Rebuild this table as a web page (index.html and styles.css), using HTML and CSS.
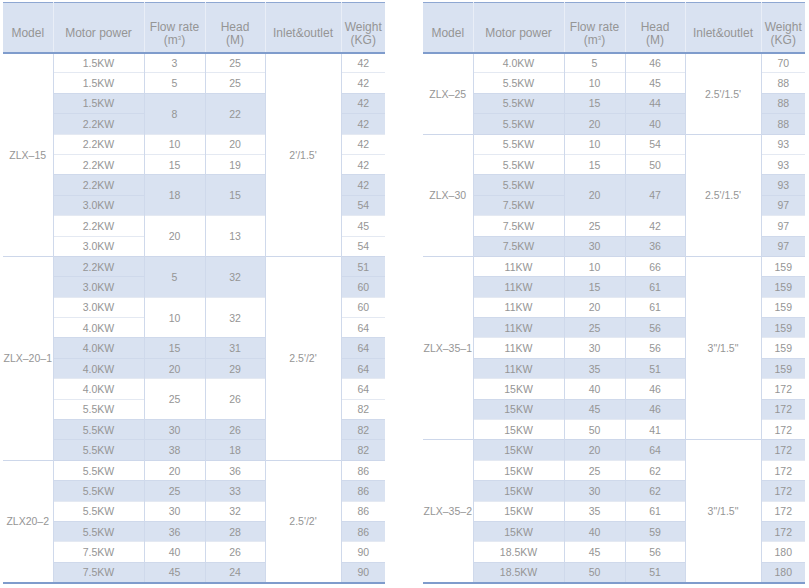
FILE: index.html
```html
<!DOCTYPE html>
<html>
<head>
<meta charset="utf-8">
<link rel="stylesheet" href="styles.css">
</head>
<body>
<div class="page">
<table class="spec">
  <colgroup><col class="c-model"><col class="c-motor"><col class="c-flow"><col class="c-head"><col class="c-inlet"><col class="c-weight"></colgroup>
  <thead>
    <tr><th>Model</th><th>Motor power</th><th>Flow rate<br>(m<sup>3</sup>)</th><th>Head<br>(M)</th><th>Inlet&amp;outlet</th><th>Weight<br>(KG)</th></tr>
  </thead>
  <tbody>
    <tr class="grp"><td rowspan="10" class="model">ZLX–15</td><td>1.5KW</td><td>3</td><td>25</td><td rowspan="10" class="inlet">2'/1.5'</td><td>42</td></tr>
    <tr><td>1.5KW</td><td>5</td><td>25</td><td>42</td></tr>
    <tr><td class="s">1.5KW</td><td class="s" rowspan="2">8</td><td class="s" rowspan="2">22</td><td class="s">42</td></tr>
    <tr><td class="s">2.2KW</td><td class="s">42</td></tr>
    <tr><td>2.2KW</td><td>10</td><td>20</td><td>42</td></tr>
    <tr><td>2.2KW</td><td>15</td><td>19</td><td>42</td></tr>
    <tr><td class="s">2.2KW</td><td class="s" rowspan="2">18</td><td class="s" rowspan="2">15</td><td class="s">42</td></tr>
    <tr><td class="s">3.0KW</td><td class="s">54</td></tr>
    <tr><td>2.2KW</td><td rowspan="2">20</td><td rowspan="2">13</td><td>45</td></tr>
    <tr><td>3.0KW</td><td>54</td></tr>

    <tr class="grp"><td rowspan="10" class="model">ZLX–20–1</td><td class="s">2.2KW</td><td class="s" rowspan="2">5</td><td class="s" rowspan="2">32</td><td rowspan="10" class="inlet">2.5'/2'</td><td class="s">51</td></tr>
    <tr><td class="s">3.0KW</td><td class="s">60</td></tr>
    <tr><td>3.0KW</td><td rowspan="2">10</td><td rowspan="2">32</td><td>60</td></tr>
    <tr><td>4.0KW</td><td>64</td></tr>
    <tr><td class="s">4.0KW</td><td class="s">15</td><td class="s">31</td><td class="s">64</td></tr>
    <tr><td class="s">4.0KW</td><td class="s">20</td><td class="s">29</td><td class="s">64</td></tr>
    <tr><td>4.0KW</td><td rowspan="2">25</td><td rowspan="2">26</td><td>64</td></tr>
    <tr><td>5.5KW</td><td>82</td></tr>
    <tr><td class="s">5.5KW</td><td class="s">30</td><td class="s">26</td><td class="s">82</td></tr>
    <tr><td class="s">5.5KW</td><td class="s">38</td><td class="s">18</td><td class="s">82</td></tr>

    <tr class="grp"><td rowspan="6" class="model">ZLX20–2</td><td>5.5KW</td><td>20</td><td>36</td><td rowspan="6" class="inlet">2.5'/2'</td><td>86</td></tr>
    <tr><td class="s">5.5KW</td><td class="s">25</td><td class="s">33</td><td class="s">86</td></tr>
    <tr><td>5.5KW</td><td>30</td><td>32</td><td>86</td></tr>
    <tr><td class="s">5.5KW</td><td class="s">36</td><td class="s">28</td><td class="s">86</td></tr>
    <tr><td>7.5KW</td><td>40</td><td>26</td><td>90</td></tr>
    <tr><td class="s">7.5KW</td><td class="s">45</td><td class="s">24</td><td class="s">90</td></tr>
  </tbody>
</table>

<table class="spec">
  <colgroup><col class="c-model"><col class="c-motor"><col class="c-flow"><col class="c-head"><col class="c-inlet"><col class="c-weight"></colgroup>
  <thead>
    <tr><th>Model</th><th>Motor power</th><th>Flow rate<br>(m<sup>3</sup>)</th><th>Head<br>(M)</th><th>Inlet&amp;outlet</th><th>Weight<br>(KG)</th></tr>
  </thead>
  <tbody>
    <tr class="grp"><td rowspan="4" class="model">ZLX–25</td><td>4.0KW</td><td>5</td><td>46</td><td rowspan="4" class="inlet">2.5'/1.5'</td><td>70</td></tr>
    <tr><td>5.5KW</td><td>10</td><td>45</td><td>88</td></tr>
    <tr><td class="s">5.5KW</td><td class="s">15</td><td class="s">44</td><td class="s">88</td></tr>
    <tr><td class="s">5.5KW</td><td class="s">20</td><td class="s">40</td><td class="s">88</td></tr>

    <tr class="grp"><td rowspan="6" class="model">ZLX–30</td><td>5.5KW</td><td>10</td><td>54</td><td rowspan="6" class="inlet">2.5'/1.5'</td><td>93</td></tr>
    <tr><td>5.5KW</td><td>15</td><td>50</td><td>93</td></tr>
    <tr><td class="s">5.5KW</td><td class="s" rowspan="2">20</td><td class="s" rowspan="2">47</td><td class="s">93</td></tr>
    <tr><td class="s">7.5KW</td><td class="s">97</td></tr>
    <tr><td>7.5KW</td><td>25</td><td>42</td><td>97</td></tr>
    <tr><td class="s">7.5KW</td><td class="s">30</td><td class="s">36</td><td class="s">97</td></tr>

    <tr class="grp"><td rowspan="9" class="model">ZLX–35–1</td><td>11KW</td><td>10</td><td>66</td><td rowspan="9" class="inlet">3"/1.5"</td><td>159</td></tr>
    <tr><td class="s">11KW</td><td class="s">15</td><td class="s">61</td><td class="s">159</td></tr>
    <tr><td>11KW</td><td>20</td><td>61</td><td>159</td></tr>
    <tr><td class="s">11KW</td><td class="s">25</td><td class="s">56</td><td class="s">159</td></tr>
    <tr><td>11KW</td><td>30</td><td>56</td><td>159</td></tr>
    <tr><td class="s">11KW</td><td class="s">35</td><td class="s">51</td><td class="s">159</td></tr>
    <tr><td>15KW</td><td>40</td><td>46</td><td>172</td></tr>
    <tr><td class="s">15KW</td><td class="s">45</td><td class="s">46</td><td class="s">172</td></tr>
    <tr><td>15KW</td><td>50</td><td>41</td><td>172</td></tr>

    <tr class="grp"><td rowspan="7" class="model">ZLX–35–2</td><td class="s">15KW</td><td class="s">20</td><td class="s">64</td><td rowspan="7" class="inlet">3"/1.5"</td><td class="s">172</td></tr>
    <tr><td>15KW</td><td>25</td><td>62</td><td>172</td></tr>
    <tr><td class="s">15KW</td><td class="s">30</td><td class="s">62</td><td class="s">172</td></tr>
    <tr><td>15KW</td><td>35</td><td>61</td><td>172</td></tr>
    <tr><td class="s">15KW</td><td class="s">40</td><td class="s">59</td><td class="s">172</td></tr>
    <tr><td>18.5KW</td><td>45</td><td>56</td><td>180</td></tr>
    <tr><td class="s">18.5KW</td><td class="s">50</td><td class="s">51</td><td class="s">180</td></tr>
  </tbody>
</table>
</div>
</body>
</html>
```

FILE: styles.css
```css
html, body {
  margin: 0;
  padding: 0;
  background: #ffffff;
}

.page {
  display: flex;
  gap: 38px;
  padding: 2px 0 0 3px;
  font-family: "Liberation Sans", Arial, sans-serif;
  color: #959595;
}

.spec {
  border-collapse: collapse;
  table-layout: fixed;
  width: 382px;
  border-top: 1px solid #8ea7d2;
  border-bottom: 2px solid #7f9ccc;
}

.c-model { width: 50px; }
.c-motor { width: 91px; }
.c-flow { width: 61px; }
.c-head { width: 60px; }
.c-inlet { width: 76px; }
.c-weight { width: 44px; }

.spec thead th {
  height: 50px;
  padding: 13px 0 0 0;
  box-sizing: border-box;
  background: #d9e2f1;
  font-weight: normal;
  font-size: 12px;
  line-height: 13px;
  color: #959595;
  text-align: center;
  vertical-align: middle;
  border-left: 1px solid #e9eef7;
  border-bottom: 2px solid #7f9ccc;
}

.spec thead th:first-child {
  border-left: none;
}

.spec sup {
  font-size: 6px;
  vertical-align: top;
  line-height: 8px;
}

.spec tbody tr {
  height: 20.4px;
}

.spec td {
  padding: 0;
  font-size: 10.5px;
  line-height: 12px;
  text-align: center;
  vertical-align: middle;
  border-left: 1px solid #cfd9eb;
  border-top: 1px solid #e4e9f2;
  white-space: nowrap;
}

.spec td.model {
  border-left: none;
  font-size: 10.5px;
}

.spec td.s {
  background: #d9e2f1;
  border-top-color: #cfd9eb;
}

.spec tr.grp td {
  border-top: 1px solid #cdd7ea;
}
```
